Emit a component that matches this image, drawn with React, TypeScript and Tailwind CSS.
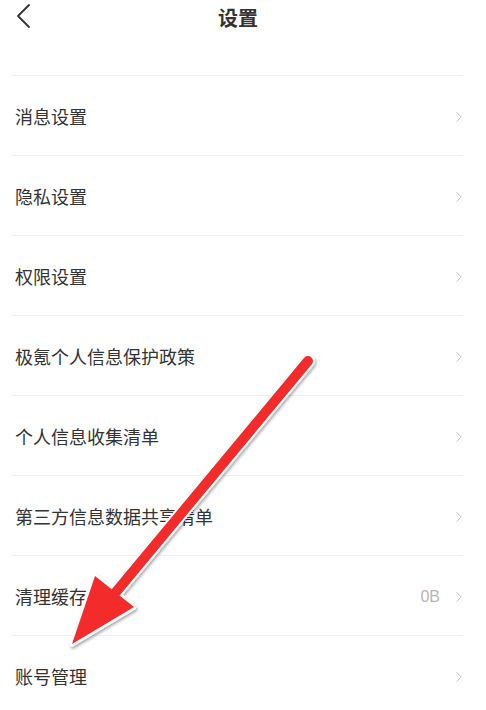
import { ChevronRight } from 'lucide-react'

const ROWS = [
  { label: '消息设置' },
  { label: '隐私设置' },
  { label: '权限设置' },
  { label: '极氪个人信息保护政策' },
  { label: '个人信息收集清单' },
  { label: '第三方信息数据共享清单' },
  { label: '清理缓存', value: '0B' },
  { label: '账号管理' },
]

function BackIcon() {
  return (
    <svg width="16" height="26" viewBox="0 0 16 26" fill="none" aria-hidden="true">
      <path d="M13 2 L2 13 L13 24" stroke="#333" strokeWidth="1.8" strokeLinecap="round" strokeLinejoin="round" />
    </svg>
  )
}

// red annotation arrow laid over the list
function Arrow() {
  return (
    <svg className="pointer-events-none absolute left-0 top-0" width="486" height="710" viewBox="0 0 486 710" aria-hidden="true">
      <defs>
        <filter id="sh" x="-20%" y="-20%" width="140%" height="140%">
          <feDropShadow dx="1" dy="2" stdDeviation="1.5" floodColor="#000" floodOpacity="0.35" />
        </filter>
      </defs>
      <g filter="url(#sh)">
        <line x1="308" y1="361" x2="116" y2="592" stroke="#fff" strokeWidth="14" strokeLinecap="round" />
        <polygon points="72,644 95,576 134,607" fill="#fff" stroke="#fff" strokeWidth="5" strokeLinejoin="round" />
      </g>
      <line x1="308" y1="361" x2="116" y2="592" stroke="#f42b2b" strokeWidth="10" strokeLinecap="round" />
      <polygon points="72,644 95,576 134,607" fill="#f42b2b" />
    </svg>
  )
}

export default function App() {
  return (
    <div className="relative h-[710px] w-[486px] overflow-hidden bg-white font-['Noto_Sans_CJK_SC',sans-serif]">
      <header className="relative flex h-[35px] items-center justify-center pr-[10px]">
        <span className="absolute left-[16px] top-[3px]">
          <BackIcon />
        </span>
        <h1 className="text-[20px] font-bold leading-none text-[#333]">设置</h1>
      </header>
      <div className="h-[40px]" />
      <ul className="ml-[12px] mr-[23px]">
        {ROWS.map((row) => (
          <li key={row.label} className="flex h-[80px] items-center border-t border-[#f0f0f0] pt-[2px]">
            <span className="ml-[3px] flex-1 text-[18px] text-[#333]">{row.label}</span>
            {row.value && (
              <span className="mr-[10px] font-['Liberation_Sans',sans-serif] text-[16px] text-[#b5b5b5]">{row.value}</span>
            )}
            <ChevronRight className="-mr-[5px] text-[#bbbbbb]" size={18} strokeWidth={1.3} />
          </li>
        ))}
      </ul>
      <Arrow />
    </div>
  )
}
